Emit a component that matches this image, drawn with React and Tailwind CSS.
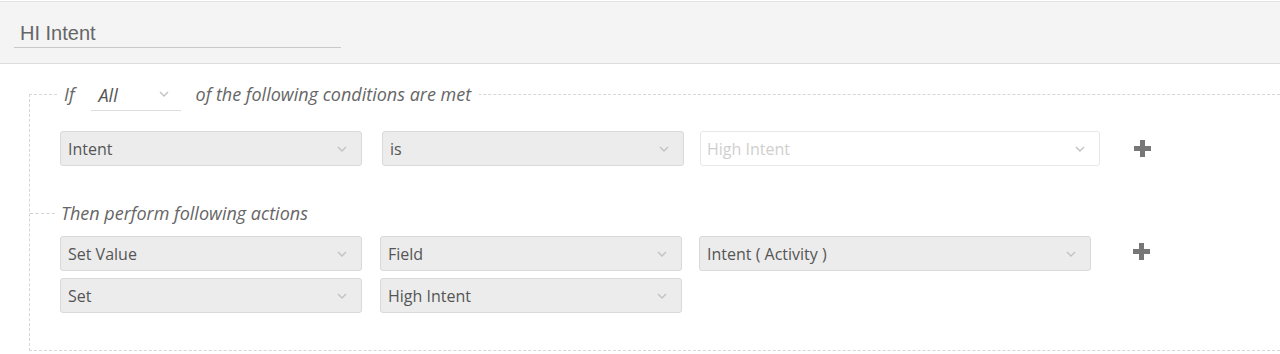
import React from "react";

function Chevron() {
  return (
    <svg width="10" height="6" viewBox="0 0 10 6" className="shrink-0">
      <polyline points="1,1 5,5 9,1" fill="none" stroke="#c2c2c2" strokeWidth="1.4" />
    </svg>
  );
}

function Plus() {
  return (
    <svg width="17" height="17" viewBox="0 0 17 17" className="shrink-0">
      <rect x="0" y="6" width="17" height="5" fill="#777" />
      <rect x="6" y="0" width="5" height="17" fill="#777" />
    </svg>
  );
}

function Select({ label, width, disabled }) {
  return (
    <div
      className={
        disabled
          ? "flex h-[35px] shrink-0 items-center justify-between rounded-[3px] border border-[#e8e8e8] bg-white pl-[6px] pr-[14px] text-[#cfcfcf]"
          : "flex h-[35px] shrink-0 items-center justify-between rounded-[3px] border border-[#d9d9d9] bg-[#ececec] pl-[7px] pr-[14px] text-[#555]"
      }
      style={{ width }}
    >
      <span>{label}</span>
      <Chevron />
    </div>
  );
}

export default function App() {
  return (
    <div
      className="min-h-[354px] bg-white text-[16px]"
      style={{ fontFamily: '"Open Sans", "Noto Sans", sans-serif' }}
    >
      <div className="border-t border-[#e2e2e2] mt-px">
        <div className="h-[62px] bg-[#f4f4f4] border-b border-[#dcdcdc] pl-[14px] pt-[15px]">
          <div
            className="w-[327px] h-[31px] border-b border-[#c9c9c9] pl-[6px] text-[20px] leading-[33px] text-[#666]"
            style={{ fontFamily: '"Liberation Sans", Arial, sans-serif' }}
          >
            HI Intent
          </div>
        </div>
      </div>

      <fieldset className="ml-[29px] mt-[13px] border-t border-l border-b border-dashed border-[#d6d6d6] pl-[30px] pt-[20px] pb-[37px]">
        <legend className="-ml-[2px] pl-[6px] pr-[8px]">
          <div className="flex h-[34px] items-center text-[18px] italic text-[#666]">
            <span>If</span>
            <div className="ml-[16px] flex h-[34px] w-[90px] items-center justify-between border-b border-[#dedede] pl-[8px] pr-[12px]">
              <span className="mt-[3px] text-[#555]">All</span>
              <Chevron />
            </div>
            <span className="ml-[15px]">of the following conditions are met</span>
          </div>
        </legend>

        <div className="flex items-center">
          <Select label="Intent" width={302} />
          <div className="ml-[20px]">
            <Select label="is" width={302} />
          </div>
          <div className="ml-[16px]">
            <Select label="High Intent" width={400} disabled />
          </div>
          <div className="ml-[34px]">
            <Plus />
          </div>
        </div>

        <div className="-ml-[30px] mt-[35px] flex h-[24px] items-center">
          <div className="w-[25px] border-t border-dashed border-[#d0d0d0]" />
          <span className="pl-[6px] text-[18px] italic text-[#666]">Then perform following actions</span>
        </div>

        <div className="mt-[11px] flex items-center">
          <Select label="Set Value" width={302} />
          <div className="ml-[18px]">
            <Select label="Field" width={302} />
          </div>
          <div className="ml-[17px]">
            <Select label="Intent ( Activity )" width={392} />
          </div>
          <div className="ml-[42px] mb-[5px]">
            <Plus />
          </div>
        </div>

        <div className="mt-[7px] flex items-center">
          <Select label="Set" width={302} />
          <div className="ml-[18px]">
            <Select label="High Intent" width={302} />
          </div>
        </div>
      </fieldset>
    </div>
  );
}
